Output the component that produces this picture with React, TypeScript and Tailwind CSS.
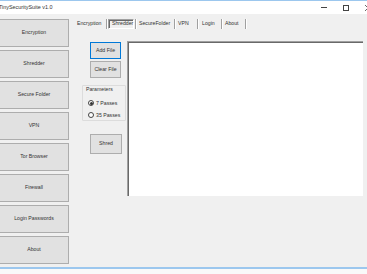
import React, { useState } from 'react';

const navItems = [
  'Encryption',
  'Shredder',
  'Secure Folder',
  'VPN',
  'Tor Browser',
  'Firewall',
  'Login Passwords',
  'About',
];

// tab element widths / left paddings tuned to the reference strip
const tabs = [
  { label: 'Encryption', w: 'w-[32px]', pl: 'pl-[3px]' },
  { label: 'Shredder', w: 'w-[26px]', pl: 'pl-[3px]' },
  { label: 'SecureFolder', w: 'w-[37px]', pl: 'pl-[2px]' },
  { label: 'VPN', w: 'w-[21px]', pl: 'pl-[2px]' },
  { label: 'Login', w: 'w-[22px]', pl: 'pl-[3px]' },
  { label: 'About', w: 'w-[22px]', pl: 'pl-[2px]' },
];

const Separator = () => (
  <div className="flex h-[10px] w-[2px] shrink-0">
    <div className="w-px bg-[#a0a0a0]" />
    <div className="w-px bg-white" />
  </div>
);

const WinButton: React.FC<{ label: string; className?: string; focused?: boolean }> = ({
  label,
  className = '',
  focused = false,
}) => (
  <button
    className={`flex items-center justify-center border bg-[#e1e1e1] text-[#333] ${
      focused ? 'border-[#0078d7]' : 'border-[#adadad]'
    } ${className}`}
  >
    {label}
  </button>
);

const Radio: React.FC<{ label: string; checked: boolean; onClick: () => void }> = ({
  label,
  checked,
  onClick,
}) => (
  <div className="flex items-center gap-[2px] pl-[5px]" onClick={onClick}>
    <div className="flex h-[6px] w-[6px] items-center justify-center rounded-full border border-[#444] bg-white">
      {checked && <div className="h-[3px] w-[3px] rounded-full bg-[#333]" />}
    </div>
    <span>{label}</span>
  </div>
);

export default function App() {
  const [passes, setPasses] = useState(7);
  const [activeTab, setActiveTab] = useState('Shredder');

  return (
    <div
      className="flex h-[274px] w-[367px] flex-col overflow-hidden bg-[#f0f0f0] text-[5.2px] leading-none text-[#333]"
      style={{ fontFamily: '"Liberation Sans", Arial, sans-serif' }}
    >
      {/* Title bar */}
      <div className="relative flex h-[14px] shrink-0 items-center border-t border-[#9cc7ee] bg-white">
        <span className="ml-[-1px] text-[5.4px]">TinySecuritySuite v1.0</span>
        <div className="ml-auto mr-[-4px] flex items-center">
          <div className="h-px w-[6px] bg-[#444]" />
          <div className="ml-[16px] h-[6px] w-[6px] border border-[#444]" />
          <svg className="ml-[16px] h-[6px] w-[6px]" viewBox="0 0 6 6">
            <path d="M0 0 L6 6 M6 0 L0 6" stroke="#444" strokeWidth="0.8" />
          </svg>
        </div>
      </div>

      {/* Body */}
      <div className="flex h-[253px] shrink-0">
        {/* Left navigation */}
        <div className="ml-[-1px] flex w-[70px] shrink-0 flex-col gap-[3px] pt-[5px]">
          {navItems.map((item) => (
            <WinButton key={item} label={item} className="h-[28px] w-full" />
          ))}
        </div>

        {/* Right area */}
        <div className="flex flex-1 flex-col pl-[5px] pt-[5px]">
          {/* Tab strip */}
          <div className="flex h-[10px] items-center">
            {tabs.map((t) => (
              <React.Fragment key={t.label}>
                <div
                  onClick={() => setActiveTab(t.label)}
                  className={`flex h-[10px] shrink-0 items-center ${t.w} ${t.pl} ${
                    activeTab === t.label
                      ? 'border border-t-[#a0a0a0] border-l-[#a0a0a0] border-r-white border-b-white bg-[#f0f0f0] shadow-[inset_1px_1px_0_#696969]'
                      : ''
                  }`}
                >
                  {t.label}
                </div>
                <div className={activeTab === t.label ? 'ml-px' : ''}>
                  <Separator />
                </div>
              </React.Fragment>
            ))}
          </div>

          {/* Content */}
          <div className="mt-[12px] flex">
            <div className="ml-[8px] flex w-[45px] shrink-0 flex-col">
              <WinButton label="Add File" focused className="ml-[8px] mt-px h-[17px] w-[31px]" />
              <WinButton label="Clear File" className="ml-[8px] mt-[2px] h-[17px] w-[31px]" />

              <div className="mt-[7px] flex h-[36px] w-[44px] flex-col rounded-[1px] border border-[#dcdcdc]">
                <span className="ml-[3px] mt-px">Parameters</span>
                <div className="mt-[8px] flex flex-col gap-[6px]">
                  <Radio label="7 Passes" checked={passes === 7} onClick={() => setPasses(7)} />
                  <Radio label="35 Passes" checked={passes === 35} onClick={() => setPasses(35)} />
                </div>
              </div>

              <WinButton label="Shred" className="ml-[8px] mt-[13px] h-[20px] w-[32px]" />
            </div>

            {/* File list */}
            <div className="h-[155px] w-[236px] shrink-0 border-l border-t border-[#a0a0a0] bg-white shadow-[inset_1px_1px_0_#696969]" />
          </div>
        </div>
      </div>

      {/* Window bottom edge */}
      <div className="h-[2px] shrink-0 bg-[#9cc7ee]" />
      <div className="flex-1 bg-[#f9f9f9]" />
    </div>
  );
}
